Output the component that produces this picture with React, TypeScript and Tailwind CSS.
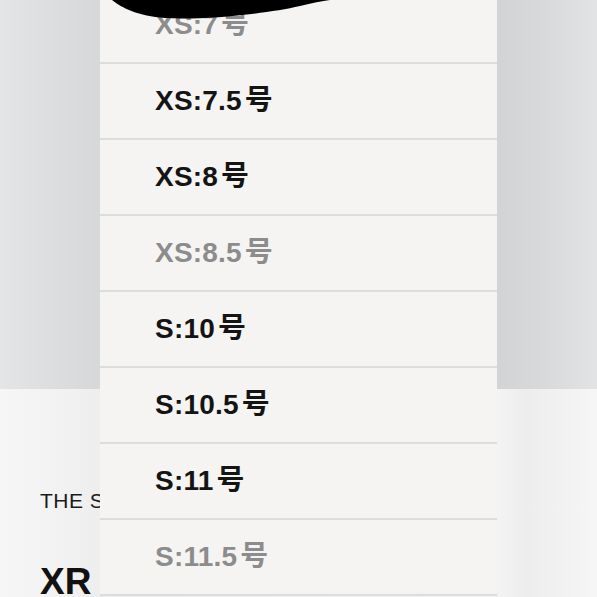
import React from "react";

const rows: { label: string; dim: boolean }[] = [
  { label: "XS:7", dim: true },
  { label: "XS:7.5", dim: false },
  { label: "XS:8", dim: false },
  { label: "XS:8.5", dim: true },
  { label: "S:10", dim: false },
  { label: "S:10.5", dim: false },
  { label: "S:11", dim: false },
  { label: "S:11.5", dim: true },
];

export default function App() {
  return (
    <div
      className="relative w-[597px] h-[597px] overflow-hidden"
      style={{ fontFamily: '"Liberation Sans", "Noto Sans CJK SC", sans-serif' }}
    >
      <div className="h-[389px] bg-[linear-gradient(to_right,#e3e5e6_0%,#dcdedf_8%,#d6d8da_16%,#d2d4d6_84%,#d8dadc_92%,#e1e3e4_100%)]" />
      <div className="h-[208px] bg-[linear-gradient(to_right,#f6f6f6_0%,#f2f2f2_10%,#eeeeee_16%,#f3f3f3_84%,#ededed_88%,#f6f6f6_100%)] pl-10 pt-[101px]">
        <div className="text-[21px] tracking-[0.5px] text-[#1a1a1a] leading-none">THE S</div>
        <div className="mt-[52px] text-[37px] font-bold text-[#111] leading-none">XR</div>
      </div>

      <div className="absolute left-[100px] top-[-12px] w-[397px] bg-[#f5f4f2] flex flex-col">
        {rows.map((r, i) => (
          <div
            key={i}
            className="h-[76px] flex items-center pl-[55px] border-b-2 border-[#dcdcda] bg-[#f5f4f2]"
          >
            <span
              className={
                "text-[28px] font-bold leading-none tracking-[0.2px] " +
                (r.dim ? "text-[#8c8c8c]" : "text-[#141414]")
              }
            >
              {r.label}
              <span className="ml-[3px]">号</span>
            </span>
          </div>
        ))}
      </div>

      <svg className="absolute left-0 top-0" width="597" height="40" viewBox="0 0 597 40">
        <path
          d="M112,0 C122,8 138,16 165,18 C205,20 265,14 300,6 C312,3 322,1 330,0 Z"
          fill="#000"
        />
      </svg>
    </div>
  );
}
